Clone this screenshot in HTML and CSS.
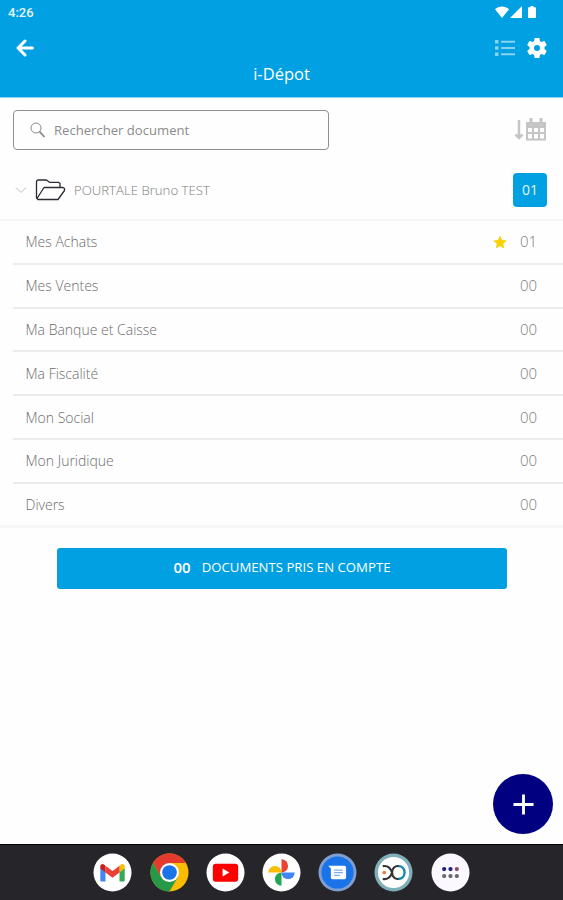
FILE: index.html
```html
<!DOCTYPE html>
<html lang="fr">
<head>
  <meta charset="UTF-8" />
  <meta name="viewport" content="width=device-width, initial-scale=1.0"/>
  <title>i-Dépot</title>
  <link rel="stylesheet" href="styles.css">
</head>
<body>
  <div class="app">
    <header class="header">
      <div class="status-bar">
        <span class="time">4:26</span>
        <svg class="status-icons" viewBox="0 0 42 14" fill="#fff">
          <path d="M0 3.2C4 -.3 10 -.3 14 3.2L7 12Z"/>
          <path d="M27 0V12H15Z"/>
          <path d="M35.5 0h3v1.2H40c.6 0 1 .4 1 1V11c0 .6-.4 1-1 1h-6c-.6 0-1-.4-1-1V2.2c0-.6.4-1 1-1h1.500Z"/>
        </svg>
      </div>
      <div class="toolbar">
        <svg class="icon-back" viewBox="0 0 18 18" fill="none" stroke="#fff" stroke-width="3" stroke-linecap="round" stroke-linejoin="round">
          <path d="M9 2L2 9l7 7M2.500 9H16.500"/>
        </svg>
        <div class="toolbar-actions">
          <svg class="icon-list" viewBox="0 0 20 18" fill="#8bd2f2">
            <path d="M0 1h3.500v3.500H0zM0 7.300h3.500v3.500H0zM0 13.500h3.500V17H0zM6 1.700h14v2H6zM6 8h14v2H6zM6 14.300h14v2H6z"/>
          </svg>
          <svg class="icon-gear" viewBox="2 2 20 20" fill="#fff">
            <path d="M19.430 12.980c.04-.32.07-.64.07-.98s-.03-.66-.07-.98l2.110-1.650c.19-.15.24-.42.12-.64l-2-3.460c-.12-.22-.39-.3-.61-.22l-2.490 1c-.52-.4-1.080-.73-1.690-.98l-.38-2.650C14.460 2.180 14.250 2 14 2h-4c-.25 0-.46.18-.49.42l-.38 2.650c-.61.25-1.170.59-1.690.98l-2.490-1c-.23-.09-.49 0-.61.22l-2 3.460c-.13.22-.07.49.12.64l2.110 1.650c-.04.32-.07.65-.07.98s.03.66.07.98l-2.110 1.650c-.19.15-.24.42-.12.64l2 3.460c.12.22.39.3.61.22l2.490-1c.52.4 1.080.73 1.690.98l.38 2.650c.03.24.24.42.49.42h4c.25 0 .46-.18.49-.42l.38-2.650c.61-.25 1.170-.59 1.690-.98l2.490 1c.23.09.49 0 .61-.22l2-3.460c.12-.22.07-.49-.12-.64zM12 15a3 3 0 1 1 0-6 3 3 0 0 1 0 6z"/>
          </svg>
        </div>
      </div>
      <h1>i-Dépot</h1>
    </header>

    <main class="content">
      <div class="search-row">
        <label class="search">
          <svg class="icon-search" viewBox="0 0 16 16" fill="none" stroke="#8a8a8a">
            <circle cx="6" cy="6" r="5"/>
            <path d="M9.600 9.600L14.500 15" stroke-width="1.800"/>
          </svg>
          <input type="text" placeholder="Rechercher document">
        </label>
        <svg class="icon-sort" viewBox="0 0 32 24" fill="none" stroke="#c5c5c5" stroke-width="2">
          <path d="M5 2V19M1.500 16.500L5 20l3.500-3.500" stroke-width="2.500"/>
          <path d="M13 9h18v12.500H13zM13 15h18M19 9v12M25 9v12"/>
          <path d="M12 4h20v4H12z" fill="#c5c5c5" stroke="none"/>
          <path d="M17 0v5M27 0v5" stroke-width="3"/>
        </svg>
      </div>

      <div class="folder">
        <svg class="icon-chevron" viewBox="0 0 12 8" fill="none" stroke="#bcbcbc"><path d="M1 1.500l5 5 5-5"/></svg>
        <svg class="icon-folder" viewBox="0 0 30 22" fill="none" stroke="#2c2b35" stroke-width="1.300" stroke-linejoin="round">
          <path d="M24.500 9V4.500L23 3.300H14L11 1H2.200L1 2.200V19L2.500 20.500H22.500L29 11.500V9.500L27.500 8.500H8.500L1.500 19.500"/>
        </svg>
        <span class="folder-name">POURTALE Bruno TEST</span>
        <span class="badge">01</span>
      </div>

      <ul class="list">
        <li>
          <span class="name">Mes Achats</span>
          <svg class="icon-star" viewBox="0 0 14 14" fill="#fbd000"><path d="M7 .4l2 4.500 4.800.5-3.600 3.300 1 4.900L7 11.100l-4.200 2.500 1-4.900L.2 5.400 5 4.900z"/></svg>
          <span class="count">01</span>
        </li>
        <li><span class="name">Mes Ventes</span><span class="count">00</span></li>
        <li><span class="name">Ma Banque et Caisse</span><span class="count">00</span></li>
        <li><span class="name">Ma Fiscalité</span><span class="count">00</span></li>
        <li><span class="name">Mon Social</span><span class="count">00</span></li>
        <li><span class="name">Mon Juridique</span><span class="count">00</span></li>
        <li><span class="name">Divers</span><span class="count">00</span></li>
      </ul>

      <button class="submit" type="button">
        <b>00</b>
        <span>DOCUMENTS PRIS EN COMPTE</span>
      </button>

      <button class="fab" type="button" aria-label="Ajouter">
        <svg viewBox="0 0 22 22" stroke="#fff" stroke-width="3"><path d="M11 .5v21M.5 11h21"/></svg>
      </button>
    </main>

    <!-- Android dock -->
    <nav class="dock">
      <svg viewBox="0 0 40 40">
        <circle cx="20" cy="20" r="19.500" fill="#fff"/>
        <path d="M7.500 15v13c0 .8.500 1.300 1.300 1.300h4V18z" fill="#4285f4"/>
        <path d="M32.500 15v13c0 .8-.5 1.300-1.300 1.300h-4V18z" fill="#34a853"/>
        <path d="M27.200 13l1.500-1.200c1.800-1.300 3.800 0 3.800 1.700V16l-5.300 4z" fill="#fbbc04"/>
        <path d="M7.500 16v-2.500c0-1.800 2-3 3.800-1.700l1.500 1.200v7z" fill="#c5221f"/>
        <path d="M12.800 13l7.200 5.400 7.200-5.400v7L20 25.300 12.800 20z" fill="#ea4335"/>
      </svg>
      <svg viewBox="0 0 40 40">
        <circle cx="20" cy="20" r="19.500" fill="#fbbc04"/>
        <path d="M3.110 10.250A19.500 19.500 0 0 1 36.890 10.250H20L11.560 24.880z" fill="#e33b2e"/>
        <path d="M3.110 10.250A19.500 19.500 0 0 0 20 39.500L28.440 24.880H11.560z" fill="#279847"/>
        <circle cx="20" cy="20" r="9.700" fill="#fff"/>
        <circle cx="20" cy="20" r="7.500" fill="#1a73e8"/>
      </svg>
      <svg viewBox="0 0 40 40">
        <circle cx="20" cy="20" r="19.500" fill="#fff"/>
        <rect x="7" y="11" width="26" height="18.500" rx="3" fill="#f00"/>
        <path d="M17 16l7 4-7 4z" fill="#fff"/>
      </svg>
      <svg viewBox="0 0 40 40">
        <circle cx="20" cy="20" r="19.500" fill="#fff"/>
        <path d="M20 6.500a6.700 6.700 0 0 1 0 13.500z" fill="#ea4335"/>
        <path d="M33.500 20a6.700 6.700 0 0 1-13.500 0z" fill="#4285f4"/>
        <path d="M20 33.500a6.700 6.700 0 0 1 0-13.500z" fill="#21a652"/>
        <path d="M6.500 20a6.700 6.700 0 0 1 13.500 0z" fill="#fbbc04"/>
      </svg>
      <svg viewBox="0 0 40 40">
        <circle cx="20" cy="20" r="19.500" fill="#7e9fcf"/>
        <circle cx="20" cy="20" r="16.500" fill="#1a73e8"/>
        <path d="M10.500 13H27c1 0 1.800.8 1.800 1.800v10.400c0 1-.8 1.800-1.800 1.800H15c-1 0-1.800-.8-1.800-1.800V16z" fill="#fff"/>
        <path d="M16.500 17.500h9M16.500 20.200h9M16.500 23h6" stroke="#7eafee" stroke-width="1.200"/>
      </svg>
      <svg viewBox="0 0 40 40" fill="none">
        <circle cx="20" cy="20" r="19.500" fill="#7fb0b9"/>
        <circle cx="20" cy="20" r="16" fill="#fff"/>
        <path d="M9 13.500c5-1 8 2 9.500 6.500-1.500 5-4.500 7.500-9.500 6.500" stroke="#333" stroke-width="2.200"/>
        <path d="M26 13.500c-4.500-1-7.500 2.500-7.500 6.500s3 7.500 7.500 6.500" stroke="#333" stroke-width="2.200"/>
        <path d="M25 13.500c8.500-.5 8.500 13.500 0 13" stroke="#168bad" stroke-width="2.400"/>
        <circle cx="10.500" cy="20" r="1.900" fill="#ed7d43"/>
      </svg>
      <svg viewBox="0 0 40 40">
        <circle cx="20" cy="20" r="19.500" fill="#fbf9ff"/>
        <g fill="#6b6874">
          <circle cx="13.500" cy="16.500" r="2.200" fill="#242476"/><circle cx="20" cy="16.500" r="2.200" fill="#242476"/><circle cx="26.500" cy="16.500" r="2.200" fill="#8a5069"/>
          <circle cx="13.500" cy="23.700" r="2.200"/><circle cx="20" cy="23.700" r="2.200"/><circle cx="26.500" cy="23.700" r="2.200"/>
        </g>
      </svg>
    </nav>
  </div>
</body>
</html>
```

FILE: styles.css
```css
:root {
  --primary: #00a0e3;
  --navy: #000080;
  --line: #ececec;
  --text-light: #7c7c7c;
}

* {
  box-sizing: border-box;
  margin: 0;
  padding: 0;
  font-family: 'Open Sans', 'Noto Sans', sans-serif;
}

body {
  background: #fefefe;
}

svg {
  display: block;
  flex-shrink: 0;
}

.app {
  height: 900px;
  display: flex;
  flex-direction: column;
}

/* header */
.header {
  height: 98px;
  background: var(--primary);
  border-bottom: 1px solid #8dd0ef;
  color: #fff;
}

.status-bar {
  height: 25px;
  padding: 0 26px 0 8px;
  display: flex;
  align-items: center;
  justify-content: space-between;
}

.time {
  font-family: Roboto, sans-serif;
  font-size: 13px;
  font-weight: 500;
  color: #e4f5fd;
}

.status-icons {
  width: 42px;
  height: 14px;
}

.toolbar {
  height: 46px;
  padding: 0 16px;
  display: flex;
  align-items: center;
  justify-content: space-between;
}

.icon-back {
  width: 18px;
  height: 18px;
}

.toolbar-actions {
  display: flex;
  align-items: center;
  gap: 12px;
}

.icon-list {
  width: 20px;
  height: 18px;
}

.icon-gear {
  width: 20px;
  height: 20px;
}

h1 {
  font-size: 16.500px;
  font-weight: 400;
  line-height: 22px;
  margin-top: -8px;
  text-align: center;
}

.content {
  position: relative;
  flex: 1;
}

.search-row {
  padding: 12px 17px 0 13px;
  display: flex;
  align-items: center;
  justify-content: space-between;
}

.search {
  width: 316px;
  height: 40px;
  padding: 0 16px;
  border: 1px solid #8f8f8f;
  border-radius: 4px;
  display: flex;
  align-items: center;
  gap: 8px;
}

.icon-search {
  width: 16px;
  height: 16px;
}

.search input {
  flex: 1;
  min-width: 0;
  border: none;
  outline: none;
  background: none;
  font-size: 13.100px;
}

.search input::placeholder {
  color: #8c8c8c;
}

.icon-sort {
  width: 32px;
  height: 24px;
}

/* folder */
.folder {
  height: 71px;
  padding: 11px 16px 0 15px;
  border-bottom: 2px solid #f5f7f7;
  display: flex;
  align-items: center;
}

.icon-chevron {
  width: 12px;
  height: 8px;
}

.icon-folder {
  width: 31px;
  height: 22px;
  margin: 0 8px 0 8px;
}

.folder-name {
  flex: 1;
  font-size: 13.200px;
  font-weight: 300;
  color: var(--text-light);
}

.badge {
  width: 34px;
  height: 34px;
  border-radius: 4px;
  background: var(--primary);
  color: #e4f5fd;
  font-size: 14px;
  line-height: 34px;
  text-align: center;
}

/* list */
.list {
  list-style: none;
  padding-left: 13px;
  border-bottom: 3px solid #f6f8f8;
}

.list li {
  height: 43.800px;
  padding: 0 26px 0 12.500px;
  border-bottom: 2px solid var(--line);
  display: flex;
  align-items: center;
}

.list li:last-child {
  height: 41px;
  border-bottom: none;
}

.name {
  flex: 1;
  font-size: 14px;
  font-weight: 300;
  color: #6c6c6c;
}

.icon-star {
  width: 14px;
  height: 14px;
  margin-right: 13px;
}

.count {
  font-size: 15px;
  line-height: 20px;
  padding-bottom: 1px;
  font-weight: 300;
  color: var(--text-light);
}

.submit {
  width: 450px;
  height: 41px;
  margin: 20px 0 0 57px;
  padding-bottom: 2px;
  border: none;
  border-radius: 3px;
  background: var(--primary);
  color: #fff;
  display: flex;
  align-items: center;
  justify-content: center;
  gap: 11px;
  font-size: 13.200px;
}

.submit b {
  font-size: 15px;
  font-weight: 600;
}

.fab {
  position: absolute;
  right: 10px;
  bottom: 10px;
  width: 60px;
  height: 60px;
  border: none;
  border-radius: 50%;
  background: var(--navy);
  display: flex;
  align-items: center;
  justify-content: center;
}

.fab svg {
  width: 21px;
  height: 21px;
}

.dock {
  height: 56px;
  background: #25252a;
  border-top: 1px solid #000;
  display: flex;
  align-items: center;
  justify-content: center;
  gap: 17.200px;
}

.dock svg {
  width: 39px;
  height: 39px;
}
```
